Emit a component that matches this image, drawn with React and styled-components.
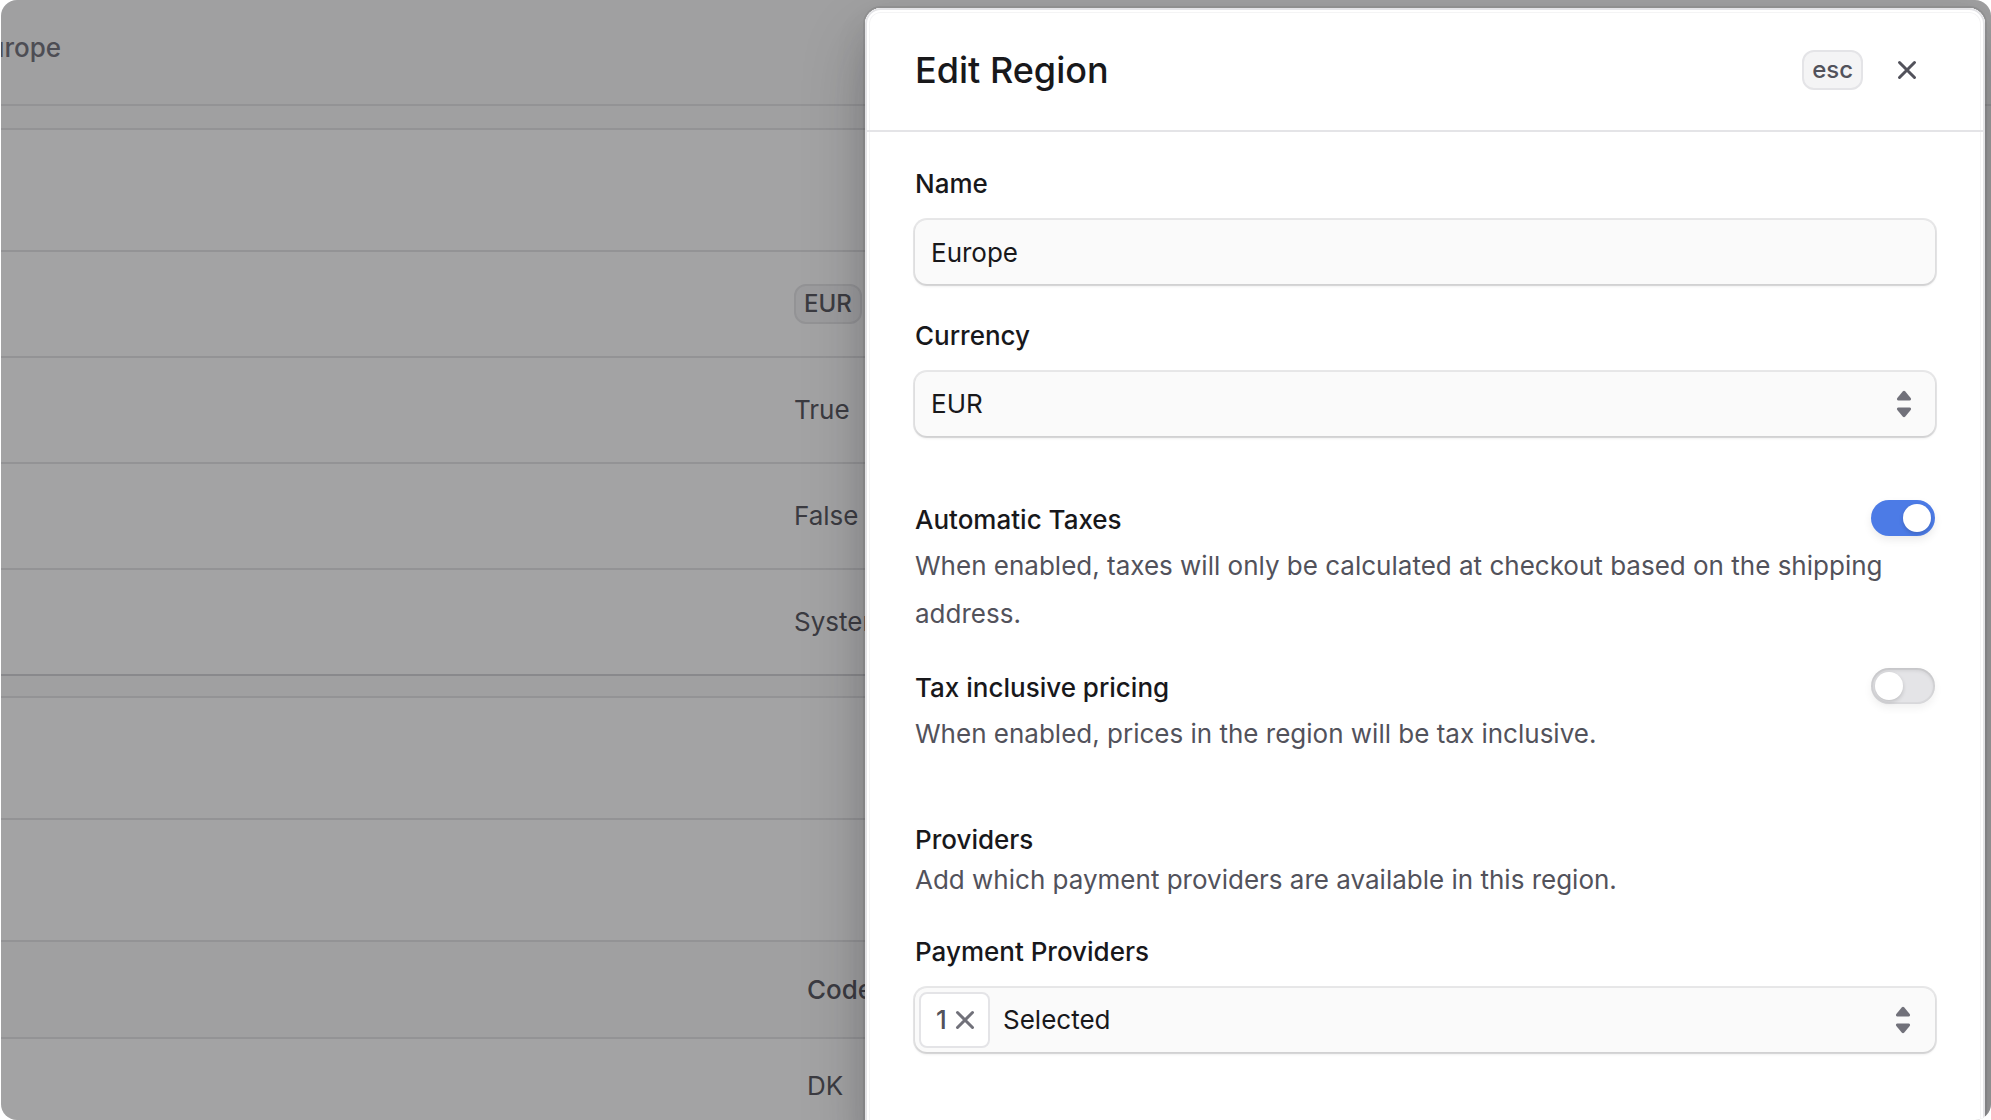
import React, { useState } from 'react';
import styled, { createGlobalStyle } from 'styled-components';

const GlobalStyle = createGlobalStyle`
  *, *::before, *::after {
    box-sizing: border-box;
  }

  body {
    margin: 0;
    background: #ffffff;
    color: #18181b;
    font-family: Inter, 'Liberation Sans', sans-serif;
    font-size: 26px;
    line-height: 40px;
    font-optical-sizing: none;
    -webkit-font-smoothing: antialiased;
  }

  button, input, select {
    margin: 0;
    font: inherit;
    color: inherit;
  }
`;

const Frame = styled.div`
  position: relative;
  height: 100vh;
  margin-left: 1px;
  border-radius: 16px;
  overflow: hidden;
  background: #fafafa;
`;

const TopBar = styled.header`
  display: flex;
  align-items: center;
  height: 106px;
  padding-bottom: 8px;
  border-bottom: 2px solid #e4e4e7;
`;

const Crumb = styled.span`
  display: flex;
  justify-content: flex-end;
  width: 60px;
  overflow: hidden;
  color: #71717a;
  font-weight: 500;
`;

const Page = styled.main`
  display: flex;
  flex-direction: column;
  gap: 20px;
  padding: 22px 32px 0 0;
`;

const Card = styled.section`
  background: #ffffff;
  border-top: 2px solid #e4e4e7;
  border-bottom: 2px solid #d4d4d8;
  color: #52525b;
`;

const CardHeader = styled.div`
  height: 120px;
`;

const Row = styled.div`
  display: grid;
  grid-template-columns: 793px 1fr;
  align-items: center;
  justify-items: start;
  height: 106px;
  border-top: 2px solid #e4e4e7;
`;

const Badge = styled.span`
  padding: 0 8px;
  border: 2px solid #e4e4e7;
  border-radius: 12px;
  background: #f4f4f5;
  color: #52525b;
  font-size: 24px;
  font-weight: 500;
  line-height: 36px;
`;

const Toolbar = styled.div`
  height: 122px;
  border-top: 2px solid #e4e4e7;
`;

const Table = styled.table`
  width: 100%;
  table-layout: fixed;
  border-collapse: collapse;
  text-align: left;

  th, td {
    height: 97px;
    padding: 0;
    border-top: 2px solid #e4e4e7;
  }

  td {
    height: 95px;
  }

  th {
    background: #fafafa;
    font-weight: 500;
  }

  th:first-child {
    width: 806px;
  }
`;

const Overlay = styled.div`
  position: absolute;
  inset: 0;
  background: rgba(24, 24, 27, 0.4);
`;

const Drawer = styled.div`
  position: absolute;
  top: 8px;
  right: 6px;
  bottom: -20px;
  width: 1120px;
  max-width: calc(100% - 12px);
  border-radius: 16px;
  background: #ffffff;
  box-shadow:
    inset 0 0 0 2px #e4e4e7,
    inset 0 0 0 4px #ffffff,
    inset 0 0 0 5px #f4f4f5,
    0 0 0 2px rgba(24, 24, 27, 0.08),
    0 16px 32px rgba(24, 24, 27, 0.1),
    0 32px 64px rgba(24, 24, 27, 0.22);
`;

const DrawerHeader = styled.div`
  display: flex;
  align-items: center;
  justify-content: space-between;
  height: 124px;
  padding: 2px 50px 0;
  border-bottom: 2px solid #e4e4e7;
`;

const Title = styled.h1`
  margin: 0;
  font-size: 36px;
  font-weight: 500;
  line-height: 56px;
`;

const HeaderActions = styled.div`
  display: flex;
  align-items: center;
  gap: 16px;
`;

const Kbd = styled.kbd`
  padding: 0 8px;
  border: 2px solid #e4e4e7;
  border-radius: 12px;
  background: #f4f4f5;
  color: #52525b;
  font-family: inherit;
  font-size: 24px;
  font-weight: 500;
  line-height: 36px;
`;

const IconButton = styled.button`
  display: grid;
  place-items: center;
  width: 56px;
  height: 56px;
  padding: 0;
  border: 0;
  background: transparent;
  color: #52525b;
`;

const Form = styled.form`
  display: flex;
  flex-direction: column;
  gap: 64px;
  padding: 32px 50px;
`;

const Group = styled.div`
  display: flex;
  flex-direction: column;
  gap: 32px;
`;

const Field = styled.div`
  display: flex;
  flex-direction: column;
  gap: 16px;
`;

const Label = styled.label`
  display: block;
  font-weight: 500;
`;

const Heading = styled.h2`
  margin: 0;
  font-size: 26px;
  font-weight: 500;
  line-height: 40px;
`;

const Hint = styled.p`
  margin: 0;
  color: #52525b;
`;

const ControlBase = `
  width: 100%;
  height: 64px;
  border: 0;
  border-radius: 12px;
  background: #fafafa;
  box-shadow:
    0 0 0 2px rgba(24, 24, 27, 0.1),
    0 2px 3px rgba(24, 24, 27, 0.12);
`;

const TextInput = styled.input`
  ${ControlBase}
  padding: 0 16px;
  outline: none;
`;

const SelectWrap = styled.div`
  position: relative;
  display: flex;

  svg {
    position: absolute;
    top: 17px;
    right: 16px;
    pointer-events: none;
  }
`;

const Select = styled.select`
  ${ControlBase}
  appearance: none;
  padding: 0 16px;
  outline: none;
`;

const MultiSelect = styled.div`
  ${ControlBase}
  display: flex;
  align-items: center;
  padding: 4px;
`;

const Chip = styled.button`
  display: flex;
  align-items: center;
  justify-content: center;
  gap: 8px;
  width: 71px;
  height: 56px;
  padding: 0 0 0 2px;
  border: 2px solid #e4e4e7;
  border-radius: 8px;
  background: #ffffff;
  color: #52525b;
  font-weight: 500;

  svg {
    color: #71717a;
  }
`;

const Trigger = styled.button`
  display: flex;
  flex: 1;
  align-items: center;
  justify-content: space-between;
  height: 56px;
  padding: 0 13px;
  border: 0;
  background: transparent;
  text-align: left;
`;

const ToggleRow = styled.div`
  display: flex;
  align-items: flex-start;
  justify-content: space-between;
  gap: 16px;
`;

const ToggleText = styled.div`
  flex: 1;
  margin-bottom: -2px;

  p {
    margin-top: 2px;
    margin-right: -40px;
    line-height: 48px;
  }
`;

const Switch = styled.input`
  appearance: none;
  flex: none;
  width: 64px;
  height: 36px;
  margin: 0;
  padding: 4px;
  border-radius: 18px;
  background: #e4e4e7;
  box-shadow:
    inset 0 0 0 2px rgba(0, 0, 0, 0.04),
    inset 0 2px 4px rgba(0, 0, 0, 0.12),
    0 4px 8px rgba(0, 0, 0, 0.06);

  &::before {
    content: '';
    display: block;
    width: 28px;
    height: 28px;
    border-radius: 50%;
    background: #ffffff;
    box-shadow: 0 2px 4px rgba(0, 0, 0, 0.16);
  }

  &:checked {
    background: #4c7be6;
    box-shadow: 0 4px 8px rgba(0, 0, 0, 0.08);
  }

  &:checked::before {
    margin-left: 28px;
  }
`;

const CrossIcon = () => (
  <svg width="20" height="20" viewBox="0 0 20 20" fill="none" aria-hidden="true">
    <path d="M2.5 2.5l15 15M17.5 2.5l-15 15" stroke="currentColor" strokeWidth="3" strokeLinecap="round" />
  </svg>
);

const UpDownIcon = () => (
  <svg width="30" height="30" viewBox="0 0 30 30" fill="#71717a" aria-hidden="true">
    <path d="M13.7 2.4a1.7 1.7 0 0 1 2.6 0l5.4 6.6c.8 1.1.2 2.5-1.1 2.5H9.4c-1.3 0-1.9-1.4-1.1-2.5z" />
    <path d="M13.7 27.6a1.7 1.7 0 0 0 2.6 0l5.4-6.6c.8-1.1.2-2.5-1.1-2.5H9.4c-1.3 0-1.9 1.4-1.1 2.5z" />
  </svg>
);

const details = ['True', 'False', 'System'];

const Toggle = ({ id, label, hint, defaultChecked }) => {
  const [checked, setChecked] = useState(defaultChecked);

  return (
    <ToggleRow>
      <ToggleText>
        <Label htmlFor={id}>{label}</Label>
        <Hint>{hint}</Hint>
      </ToggleText>
      <Switch
        id={id}
        type="checkbox"
        role="switch"
        checked={checked}
        onChange={(e) => setChecked(e.target.checked)}
      />
    </ToggleRow>
  );
};

const RegionPage = () => (
  <>
    <TopBar>
      <Crumb>Europe</Crumb>
    </TopBar>
    <Page>
      <Card>
        <CardHeader />
        <Row>
          <span />
          <Badge>EUR</Badge>
        </Row>
        {details.map((value) => (
          <Row key={value}>
            <span />
            <span>{value}</span>
          </Row>
        ))}
      </Card>
      <Card>
        <CardHeader />
        <Toolbar />
        <Table>
          <thead>
            <tr>
              <th />
              <th>Code</th>
            </tr>
          </thead>
          <tbody>
            <tr>
              <td />
              <td>DK</td>
            </tr>
          </tbody>
        </Table>
      </Card>
    </Page>
  </>
);

const EditRegion = () => {
  const [name, setName] = useState('Europe');

  return (
    <Drawer role="dialog" aria-labelledby="drawer-title">
      <DrawerHeader>
        <Title id="drawer-title">Edit Region</Title>
        <HeaderActions>
          <Kbd>esc</Kbd>
          <IconButton type="button" aria-label="Close">
            <CrossIcon />
          </IconButton>
        </HeaderActions>
      </DrawerHeader>
      <Form>
        <Group>
          <Field>
            <Label htmlFor="name">Name</Label>
            <TextInput id="name" value={name} onChange={(e) => setName(e.target.value)} />
          </Field>
          <Field>
            <Label htmlFor="currency">Currency</Label>
            <SelectWrap>
              <Select id="currency" defaultValue="EUR">
                <option>EUR</option>
              </Select>
              <UpDownIcon />
            </SelectWrap>
          </Field>
        </Group>
        <Group>
          <Toggle
            id="automatic-taxes"
            label="Automatic Taxes"
            hint="When enabled, taxes will only be calculated at checkout based on the shipping address."
            defaultChecked
          />
          <Toggle
            id="tax-inclusive"
            label="Tax inclusive pricing"
            hint="When enabled, prices in the region will be tax inclusive."
            defaultChecked={false}
          />
        </Group>
        <Group>
          <div>
            <Heading>Providers</Heading>
            <Hint>Add which payment providers are available in this region.</Hint>
          </div>
          <Field>
            <Label htmlFor="providers">Payment Providers</Label>
            <MultiSelect>
              <Chip type="button" aria-label="Clear 1 selected">
                <span>1</span>
                <CrossIcon />
              </Chip>
              <Trigger id="providers" type="button">
                Selected
                <UpDownIcon />
              </Trigger>
            </MultiSelect>
          </Field>
        </Group>
      </Form>
    </Drawer>
  );
};

const App = () => (
  <>
    <GlobalStyle />
    <Frame>
      <RegionPage />
      <Overlay />
      <EditRegion />
    </Frame>
  </>
);

export default App;
